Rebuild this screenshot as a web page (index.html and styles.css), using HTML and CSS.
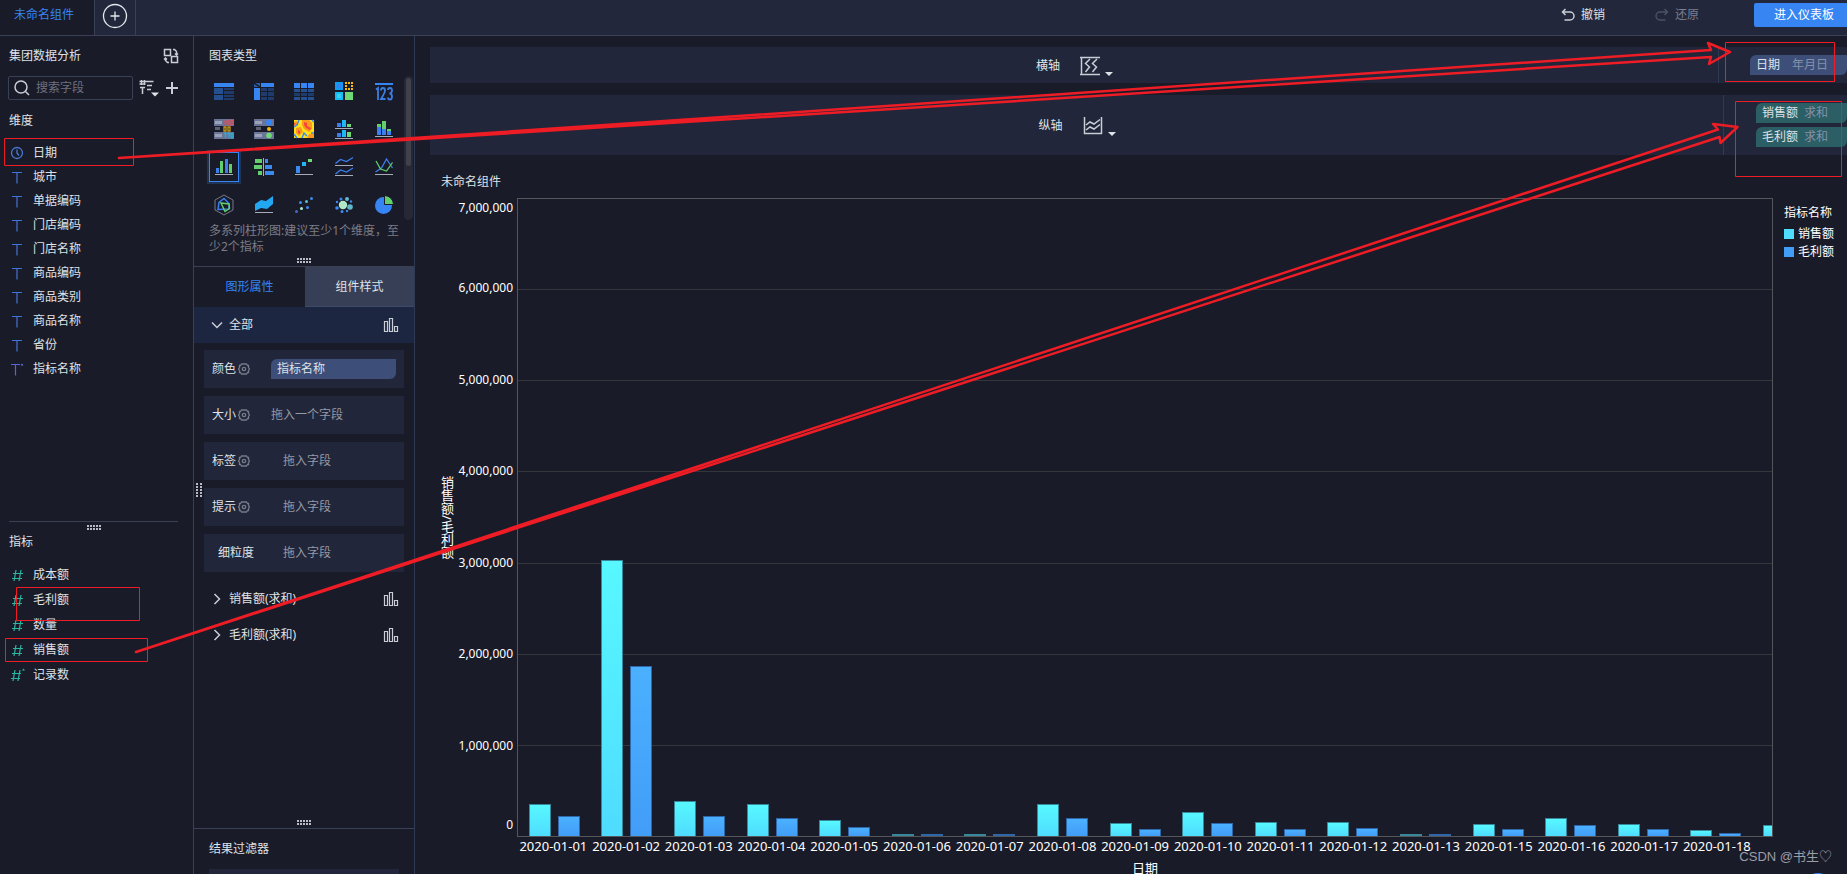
FILE: index.html
```html
<!DOCTYPE html>
<html lang="zh-CN">
<head>
<meta charset="utf-8">
<title>未命名组件</title>
<link rel="stylesheet" href="styles.css">
</head>
<body>
<svg class="defs" aria-hidden="true">
  <symbol id="i-text" viewBox="0 0 16 16"><path d="M3 3.500h10M8 3.500v11" fill="none" stroke="#3f74d6" stroke-width="1.200"/></symbol>
  <symbol id="i-text-star" viewBox="0 0 16 16"><path d="M2 3.500h9M6.500 3.500v11" fill="none" stroke="#5a62d8" stroke-width="1.200"/><path d="M11.500 4.500l1.500-2 1.500 2z" fill="#5a7be0"/></symbol>
  <symbol id="i-num" viewBox="0 0 16 16"><path d="M7 3L5 14M12 3l-2 11M4 6.500h10M3 11.500h10" fill="none" stroke="#2bb5a0" stroke-width="1.200"/></symbol>
  <symbol id="i-num-star" viewBox="0 0 16 16"><path d="M6 3L4 14M11 3L9 14M3 6.500h9M2 11.500h9" fill="none" stroke="#2bb5a0" stroke-width="1.200"/><path d="M13 3.500l1.500-2 1.500 2z" fill="#2bb5a0"/></symbol>
  <symbol id="i-gear" viewBox="0 0 12 12"><path d="M3.500 1h5l1 1.500h1v2L11.500 6l-1 1.500v2h-1l-1 1.500h-5l-1-1.500h-1v-2L.5 6l1-1.500v-2h1z" fill="none" stroke="#767a89" stroke-width="1.300"/><circle cx="6" cy="6" r="1.700" fill="none" stroke="#767a89" stroke-width="1.300"/></symbol>
  <symbol id="i-bars" viewBox="0 0 16 16"><path d="M1.500 4.500h3v10h-3zM6.500 1.500h3v13h-3zM11.500 9.500h3v5h-3z" fill="none" stroke="#c9ced6" stroke-width="1.200"/></symbol>
  <symbol id="i-grip" viewBox="0 0 14 5"><path d="M0 1h14M0 4h14" stroke="#b9bcc4" stroke-width="2" stroke-dasharray="2 1"/></symbol>
</svg>

<header class="topbar">
  <a class="topbar-tab" href="#">未命名组件</a>
  <button class="topbar-add" type="button" aria-label="添加">
    <svg width="26" height="26" viewBox="0 0 26 26"><circle cx="13" cy="13" r="11.500"/><path d="M13 8.500v9M8.500 13h9"/></svg>
  </button>
  <div class="topbar-actions">
    <button class="action" type="button">
      <svg width="14" height="14" viewBox="0 0 14 14"><path d="M4.500 1L1.500 4l3 3M1.500 4h7.500a4 4 0 0 1 0 8H3.500"/></svg>撤销
    </button>
    <button class="action action-off" type="button">
      <svg width="14" height="14" viewBox="0 0 14 14"><path d="M9.500 1l3 3-3 3M12.500 4H5a4 4 0 0 0 0 8h5.500"/></svg>还原
    </button>
  </div>
  <button class="enter" type="button">进入仪表板</button>
</header>

<div class="workspace">
  <aside class="fields">
    <section class="dims">
      <div class="fields-head">
        <h2>集团数据分析</h2>
        <button class="bare" type="button" aria-label="切换">
          <svg class="line" width="16" height="16" viewBox="0 0 16 16"><path d="M1.500 1.500h6v6h-6zM8.500 8.500h6v6h-6zM10 1.500h1.500l2 2V7M12 5.500l1.500 1.500L15 5.500M6 14.500H4.500l-2-2V10M1 11.500L2.500 10 4 11.500"/></svg>
        </button>
      </div>
      <div class="search-row">
        <label class="search">
          <svg class="line" width="16" height="16" viewBox="0 0 16 16"><circle cx="7" cy="7" r="6"/><path d="M11.500 11.500l3.500 3.500"/></svg>
          <input type="text" placeholder="搜索字段" aria-label="搜索字段">
        </label>
        <button class="bare" type="button" aria-label="排序">
          <svg class="line" width="20" height="18" viewBox="0 0 20 18"><path d="M2.500 1v5M5.500 1v5M.5 2.500h14M.5 5h6M8 6.500h5M8 10.500h4M3.500 8v7M1 8.500h5"/><path class="fill" d="M12 13.500h8L16 17.500z"/></svg>
        </button>
        <button class="bare" type="button" aria-label="新增">
          <svg class="line thick" width="14" height="14" viewBox="0 0 14 14"><path d="M7 1v12M1 7h12"/></svg>
        </button>
      </div>
      <h2 class="group">维度</h2>
      <ul class="dim-list">
        <li><svg class="ico" viewBox="0 0 16 16"><circle cx="8" cy="8" r="5.500" fill="none" stroke="#4a78cf" stroke-width="1.300"/><path d="M8 4.500V8l2 2.500" fill="none" stroke="#4a78cf" stroke-width="1.300"/></svg>日期</li>
        <li><svg class="ico"><use href="#i-text"/></svg>城市</li>
        <li><svg class="ico"><use href="#i-text"/></svg>单据编码</li>
        <li><svg class="ico"><use href="#i-text"/></svg>门店编码</li>
        <li><svg class="ico"><use href="#i-text"/></svg>门店名称</li>
        <li><svg class="ico"><use href="#i-text"/></svg>商品编码</li>
        <li><svg class="ico"><use href="#i-text"/></svg>商品类别</li>
        <li><svg class="ico"><use href="#i-text"/></svg>商品名称</li>
        <li><svg class="ico"><use href="#i-text"/></svg>省份</li>
        <li><svg class="ico"><use href="#i-text-star"/></svg>指标名称</li>
      </ul>
    </section>
    <section class="measures">
      <svg class="grip"><use href="#i-grip"/></svg>
      <h2>指标</h2>
      <ul class="measure-list">
        <li><svg class="ico"><use href="#i-num"/></svg>成本额</li>
        <li><svg class="ico"><use href="#i-num"/></svg>毛利额</li>
        <li><svg class="ico"><use href="#i-num"/></svg>数量</li>
        <li><svg class="ico"><use href="#i-num"/></svg>销售额</li>
        <li><svg class="ico"><use href="#i-num-star"/></svg>记录数</li>
      </ul>
    </section>
  </aside>

  <aside class="config">
    <section class="types">
      <h2>图表类型</h2>
      <div class="types-scroll">
        <div class="type-grid">
          <button type="button" aria-label="分组表"><svg viewBox="0 0 30 30"><path fill="#3685f2" d="M5 7h20v4H5z"/><path fill="#25508f" d="M5 12h9v6H5zM5 19h9v5H5z"/><path fill="#1f3b6b" d="M15 12h10v2H15zM15 15h10v3H15zM15 19h10v2H15zM15 22h10v2H15z"/></svg></button>
          <button type="button" aria-label="交叉表"><svg viewBox="0 0 30 30"><path fill="#3685f2" d="M12 7h13v4H12zM5 12h6v12H5z"/><path fill="#2a5ba8" d="M5 7h6v4H5z"/><path d="M5 7l6 4" stroke="#1a1b29" stroke-width="1.500"/><path fill="#1f3b6b" d="M12 12h6v3h-6zM19 12h6v3h-6zM12 16h6v4h-6zM19 16h6v4h-6zM12 21h6v3h-6zM19 21h6v3h-6z"/></svg></button>
          <button type="button" aria-label="明细表"><svg viewBox="0 0 30 30"><path fill="#3685f2" d="M5 7h6v5H5zM12 7h6v5h-6zM19 7h6v5h-6z"/><path fill="#25508f" d="M5 13h6v3H5zM12 13h6v3h-6zM19 13h6v3h-6zM5 21h6v3H5zM12 21h6v3h-6zM19 21h6v3h-6z"/><path fill="#1f3b6b" d="M5 17h6v3H5zM12 17h6v3h-6zM19 17h6v3h-6z"/></svg></button>
          <button type="button" aria-label="颜色表格"><svg viewBox="0 0 30 30"><path fill="#0e9bf5" d="M6 6h8v8H6z"/><path fill="#3a7ff0" d="M8 8h4v4H8z"/><path fill="#12bdf5" d="M6 16h8v8H6z"/><path fill="#3ccdf5" d="M8 18h4v4H8z"/><path fill="#6fd977" d="M16 16h8v8h-8z"/><path fill="#fbb90c" d="M16 6h2v2h-2zM19 6h2v2h-2zM22 6h2v2h-2zM16 9h2v2h-2zM22 9h2v2h-2zM16 12h2v2h-2zM19 12h2v2h-2zM22 12h2v2h-2z"/></svg></button>
          <button type="button" aria-label="指标卡"><svg viewBox="0 0 30 30"><path fill="#3685f2" d="M6 7h18v2H6z"/><path fill="none" stroke="#3a7fe0" stroke-width="1.800" d="M7 13.500l2-1.500v12M12 14.500q0-2.500 2-2.500t2 2.500q0 2-4 8.500h4.500M19 14q0-2 2-2t2 2.500-2.500 3q2.500 0 2.500 3t-2 3-2-2"/></svg></button>

          <button type="button" aria-label="指标色块"><svg viewBox="0 0 30 30"><path fill="#697496" d="M5 5h20v7H5zM5 18h20v7H5z"/><path fill="#9aa2b8" d="M6 7h7v3H6zM6 20h7v3H6z"/><path fill="#5c6072" d="M6 13h5v3H6z"/><path fill="none" stroke="#d0525e" stroke-width="1.300" d="M16 6.500v4M18 6.500h2v4h-2zM22 6.500h2v4h-2z"/><path fill="none" stroke="#c9981a" stroke-width="1.300" d="M15 13h2v4h-2zM19 13h2v4h-2z"/><path fill="none" stroke="#35a8d0" stroke-width="1.300" d="M15 19.500h2l-1 4M18.500 19.500h2l-1 4M22 19.500h2v4h-2z"/></svg></button>
          <button type="button" aria-label="指标状态"><svg viewBox="0 0 30 30"><path fill="#697496" d="M5 5h20v7H5zM5 18h20v7H5z"/><path fill="#9aa2b8" d="M6 7h7v3H6zM6 20h7v3H6z"/><path fill="#5c6072" d="M7 13h5v3H7z"/><circle cx="20" cy="8.500" r="3" fill="#3685f2"/><circle cx="20" cy="15" r="2" fill="#fbb90c"/><circle cx="20" cy="21.500" r="2.800" fill="#6fd977"/></svg></button>
          <button type="button" aria-label="热力图"><svg viewBox="0 0 30 30"><path fill="#ffe11a" d="M5 6h20v18H5z"/><path fill="#fb9a1c" d="M13 6h7l3 3v6l-3 3-5-3-2-4zM7 14l5-1 2 5-4 4-3-3zM5 8l3-1v4l-3 1zM20 20h5v4h-7z"/><path fill="#f5453c" d="M15 8l3 1v3l4 2-1 2-4-2-2-3zM9 16l2 1v3l-2-1zM5 9l2 1-2 1z"/><path fill="none" stroke="#3a8af0" stroke-width="1.500" d="M5 13l3-2 2-5M13 24l2-5 3 3M23 6l2 2M22 19h3M5 20l3 4"/></svg></button>
          <button type="button" aria-label="分区柱形图"><svg viewBox="0 0 30 30"><path fill="#3a7ff0" d="M8 9h4v4H8zM8 19h4v4H8z"/><path fill="#1fb8f0" d="M13 6h4v7h-4zM13 16h4v7h-4z"/><path fill="#6fd977" d="M18 10h4v3h-4zM18 18h4v5h-4z"/><path fill="#a7abb8" d="M6 14h18v1H6zM6 24h18v1H6z"/></svg></button>
          <button type="button" aria-label="堆积柱形图"><svg viewBox="0 0 30 30"><path fill="#3a7ff0" d="M8 13h4v8H8zM13 15h4v6h-4zM18 17h4v4h-4z"/><path fill="#62cf6c" d="M8 10h4v3H8zM13 7h4v8h-4zM18 15h4v2h-4z"/><path fill="#a7abb8" d="M6 22h18v1H6z"/></svg></button>

          <button class="picked" type="button" aria-label="多系列柱形图"><svg viewBox="0 0 30 30"><path fill="#3a7ff0" d="M7 16h3v5H7zM16 7h3v14h-3z"/><path fill="#62cf6c" d="M11 9h3v12h-3zM20 12h3v9h-3z"/><path fill="#a7abb8" d="M6 22h18v1H6z"/></svg></button>
          <button type="button" aria-label="对比柱状图"><svg viewBox="0 0 30 30"><path fill="#62cf6c" d="M6 7h7v4H6zM5 13h8v4H5zM9 19h4v4H9z"/><path fill="#3a8af0" d="M16 7h3v4h-3zM16 13h7v4h-7zM16 19h9v4h-9z"/><path fill="#a7abb8" d="M14 6h1v18h-1z"/></svg></button>
          <button type="button" aria-label="瀑布图"><svg viewBox="0 0 30 30"><path fill="#3a8af0" d="M7 14h4v7H7z"/><path fill="#1fb8f0" d="M13 10h4v4h-4z"/><path fill="#6fd977" d="M19 7h4v3h-4z"/><path fill="#a7abb8" d="M6 22h18v1H6z"/></svg></button>
          <button type="button" aria-label="分区折线图"><svg viewBox="0 0 30 30"><path fill="none" stroke="#3a7ff0" stroke-width="1.300" d="M6.500 11.500l5-4 6 2 6.500-4M6.500 22l5-4 6 2 6.500-4"/><path fill="#a7abb8" d="M6 13h18v1H6zM6 23h18v1H6z"/></svg></button>
          <button type="button" aria-label="多系列折线图"><svg viewBox="0 0 30 30"><path fill="none" stroke="#3a7ff0" stroke-width="1.300" d="M6.500 20l6-4 5-9 6 9"/><path fill="none" stroke="#62cf6c" stroke-width="1.300" d="M7 9l4.500 8 6 2 6-8.500"/><path fill="#a7abb8" d="M6 22h18v1H6z"/></svg></button>

          <button type="button" aria-label="雷达图"><svg viewBox="0 0 30 30"><path fill="none" stroke="#747886" d="M15 5l9 5v10l-9 5-9-5V10z"/><path fill="none" stroke="#3a7ff0" stroke-width="1.500" d="M15 8.500l5 5v5.500l-11 .5 1-7z"/><path fill="none" stroke="#62cf6c" stroke-width="1.500" d="M12 13l8 1 .5 4.500-4.500 3z"/></svg></button>
          <button type="button" aria-label="面积图"><svg viewBox="0 0 30 30"><path fill="#22a8f2" d="M6 14l6-4 5 1 7-5v8l-6 5-6-1-6 3z"/><path fill="#a7abb8" d="M6 22h18v1H6z"/></svg></button>
          <button type="button" aria-label="散点图"><svg viewBox="0 0 30 30"><g fill="#3a8af0"><circle cx="11.500" cy="12.500" r="1.500"/><circle cx="22.500" cy="8.500" r="1.500"/><circle cx="18.500" cy="17.500" r="1.500"/><circle cx="7.500" cy="21.500" r="1.500" fill="#4668c0"/></g><circle cx="17.500" cy="11.500" r="1.500" fill="#5bc0d0"/><circle cx="12.500" cy="18.500" r="1.500" fill="#aeeac8"/></svg></button>
          <button type="button" aria-label="气泡图"><svg viewBox="0 0 30 30"><circle cx="14" cy="15" r="4.200" fill="#aeeac8"/><g fill="#5fb8cc"><circle cx="18" cy="9" r="2"/><circle cx="21" cy="17" r="2.800"/></g><g fill="#3a8af0"><circle cx="12" cy="9" r="1.500"/><circle cx="8" cy="12" r="1.200"/><circle cx="8" cy="18" r="1.800"/><circle cx="13" cy="21.500" r="1.500"/><circle cx="18" cy="21" r="1.200"/><circle cx="22" cy="11.500" r="1.200"/></g></svg></button>
          <button type="button" aria-label="饼图"><svg viewBox="0 0 30 30"><circle cx="14.500" cy="15.500" r="8.500" fill="#3685f2"/><path fill="#62cf6c" stroke="#1a1b29" d="M15.500 5.500a9 9 0 0 1 9 9h-9z"/></svg></button>
        </div>
        <div class="scroll-track"><div class="scroll-thumb"></div></div>
      </div>
      <p class="hint">多系列柱形图:建议至少1个维度，至少2个指标</p>
      <svg class="grip"><use href="#i-grip"/></svg>
    </section>

    <section class="attrs">
      <svg class="side-grip" width="6" height="14" viewBox="0 0 6 14"><path d="M1 0v14M5 0v14" stroke="#b9bcc4" stroke-width="2" stroke-dasharray="2 1"/></svg>
      <div class="tabs">
        <button class="tab tab-on" type="button">图形属性</button>
        <button class="tab" type="button">组件样式</button>
      </div>
      <button class="fold fold-open" type="button">
        <svg class="line" width="12" height="12" viewBox="0 0 12 12"><path d="M1 3.500l5 5 5-5"/></svg>
        <span>全部</span><svg class="ico"><use href="#i-bars"/></svg>
      </button>
      <div class="cards">
        <div class="card"><span class="card-name">颜色<svg class="gear"><use href="#i-gear"/></svg></span><span class="pill pill-wide">指标名称</span></div>
        <div class="card"><span class="card-name">大小<svg class="gear"><use href="#i-gear"/></svg></span><span class="drop">拖入一个字段</span></div>
        <div class="card"><span class="card-name">标签<svg class="gear"><use href="#i-gear"/></svg></span><span class="drop">拖入字段</span></div>
        <div class="card"><span class="card-name">提示<svg class="gear"><use href="#i-gear"/></svg></span><span class="drop">拖入字段</span></div>
        <div class="card"><span class="card-name card-plain">细粒度</span><span class="drop">拖入字段</span></div>
      </div>
      <button class="fold" type="button">
        <svg class="line" width="12" height="12" viewBox="0 0 12 12"><path d="M3.500 1l5 5-5 5"/></svg>
        <span>销售额(求和)</span><svg class="ico"><use href="#i-bars"/></svg>
      </button>
      <button class="fold" type="button">
        <svg class="line" width="12" height="12" viewBox="0 0 12 12"><path d="M3.500 1l5 5-5 5"/></svg>
        <span>毛利额(求和)</span><svg class="ico"><use href="#i-bars"/></svg>
      </button>
      <svg class="grip"><use href="#i-grip"/></svg>
    </section>

    <section class="filter">
      <h2>结果过滤器</h2>
      <div class="filter-box"></div>
    </section>
  </aside>

  <main class="canvas">
    <div class="axis-row">
      <div class="axis-name">横轴
        <svg class="line" width="20" height="20" viewBox="0 0 20 20"><path d="M0 1.500h20M0 18.500h20M1.500 1v18M10 3L5.500 7.500l4 3.500L5.500 16M17 3l-4.500 4.500 4 3.500-4 5"/></svg>
        <svg class="caret" width="8" height="4" viewBox="0 0 8 4"><path d="M0 0h8L4 4z"/></svg>
      </div>
      <div class="axis-fields axis-fields-x"><span class="pill">日期<i class="pill-far">年月日</i></span></div>
    </div>
    <div class="axis-row">
      <div class="axis-name">纵轴
        <svg class="line" width="20" height="20" viewBox="0 0 20 20"><path d="M1.500 1v17M18.500 1v17M1 17.500h18M3 9l4-3 4 2 6-4.500M3 14l4-3 4 2 6-4.500"/></svg>
        <svg class="caret" width="8" height="4" viewBox="0 0 8 4"><path d="M0 0h8L4 4z"/></svg>
      </div>
      <div class="axis-fields axis-fields-y"><span class="pill pill-teal">销售额<i>求和</i></span><span class="pill pill-teal">毛利额<i>求和</i></span></div>
    </div>
    <h1 class="chart-title">未命名组件</h1>
    <div class="chart">
      <div class="y-title">销售额/毛利额</div>
      <div class="y-labels">
        <span>7,000,000</span><span>6,000,000</span><span>5,000,000</span><span>4,000,000</span><span>3,000,000</span><span>2,000,000</span><span>1,000,000</span><span>0</span>
      </div>
      <div class="plot">
        <div class="grid-lines"><i></i><i></i><i></i><i></i><i></i><i></i><i></i></div>
        <div class="bars" id="bars"></div>
      </div>
      <div class="legend">
        <strong>指标名称</strong>
        <span><i class="key key-a"></i>销售额</span>
        <span><i class="key key-b"></i>毛利额</span>
      </div>
      <div class="x-labels" id="x-labels"></div>
      <div class="x-title">日期</div>
    </div>
  </main>
</div>

<div class="watermark">CSDN @书生♡</div>
<div class="bubble"></div>

<svg class="marks" viewBox="0 0 1847 874" preserveAspectRatio="none" aria-hidden="true">
  <g class="boxes">
    <rect x="4.500" y="138.500" width="129" height="27"/>
    <rect x="16.500" y="587.500" width="123" height="33"/>
    <rect x="5.500" y="638.500" width="142" height="23"/>
    <rect x="1725.500" y="42.500" width="109" height="39"/>
    <rect x="1735.500" y="101.500" width="106" height="75"/>
  </g>
  <path d="M119 158L1711 50l-3-7 22 9-21 12 2-7z"/>
  <path d="M136 652L1718 129.500l-5-5.500 24.500 3-17 16-1-6z"/>
</svg>
<script src="chart.js"></script>
</body>
</html>
```

FILE: chart.js
```js
// Daily sales and gross profit, as percentages of the 7,000,000 axis maximum.
const rows = [
  ["2020-01-01", 5.1, 3.1], ["2020-01-02", 43.4, 26.7], ["2020-01-03", 5.5, 3.2],
  ["2020-01-04", 5.1, 2.9], ["2020-01-05", 2.5, 1.4], ["2020-01-06", 0.3, 0.3],
  ["2020-01-07", 0.3, 0.3], ["2020-01-08", 5.1, 2.9], ["2020-01-09", 2.1, 1.1],
  ["2020-01-10", 3.7, 2.1], ["2020-01-11", 2.2, 1.1], ["2020-01-12", 2.2, 1.3],
  ["2020-01-13", 0.3, 0.3], ["2020-01-15", 1.9, 1.1], ["2020-01-16", 2.9, 1.8],
  ["2020-01-17", 1.9, 1.1], ["2020-01-18", 1, 0.5], ["", 1.8, 1]
];
const bars = document.getElementById("bars");
const labels = document.getElementById("x-labels");
for (const [day, sales, profit] of rows) {
  const group = document.createElement("div");
  group.className = "bar-group";
  for (const [kind, value] of [["bar-a", sales], ["bar-b", profit]]) {
    const bar = document.createElement("div");
    bar.className = "bar " + kind + (value < 0.4 ? " bar-dim" : "");
    bar.style.height = value + "%";
    group.append(bar);
  }
  bars.append(group);
  const label = document.createElement("span");
  label.textContent = day;
  labels.append(label);
}
```

FILE: styles.css
```css
* { box-sizing: border-box; }

body {
  margin: 0;
  height: 100vh;
  overflow: hidden;
  display: flex;
  flex-direction: column;
  background: #1a1b29;
  color: #dfe2e6;
  font: 12px/16px "Noto Sans", "Noto Sans CJK SC", sans-serif;
}

h1, h2 { margin: 0; font-size: 12px; font-weight: 400; line-height: 16px; }
ul { margin: 0; padding: 0; list-style: none; }
i { font-style: normal; }
button { font: inherit; color: inherit; background: none; border: 0; padding: 0; }
svg { display: block; flex: none; }
.defs { position: absolute; width: 0; height: 0; }
.ico { width: 16px; height: 16px; }
.line { fill: none; stroke: #c9ced6; stroke-width: 1.5; }
.line .fill { fill: #dfe2e6; stroke: none; }
.line.thick { stroke-width: 2; }
.grip { width: 14px; height: 5px; }

/* top bar */
.topbar {
  flex: none;
  display: flex;
  height: 36px;
  background: #22273b;
  border-bottom: 1px solid #3a4056;
}
.topbar-tab {
  width: 95px;
  padding: 7px 0 0 14px;
  background: #1a1b29;
  border-right: 1px solid #3a4056;
  color: #3685f2;
  text-decoration: none;
}
.topbar-add { width: 41px; padding: 2px 0 0 7px; border-right: 1px solid #3a4056; }
.topbar-add svg { margin-bottom: 6px; fill: none; stroke: #e6e8ec; stroke-width: 1.3; }
.topbar-actions { display: flex; gap: 50px; margin-left: auto; padding-bottom: 5px; }
.action { display: flex; align-items: center; gap: 6px; }
.action svg { fill: none; stroke: #c9ced6; stroke-width: 1.5; }
.action-off { color: #7b7f90; }
.action-off svg { stroke: #4c5166; }
.enter {
  height: 24px;
  margin: 3px 0 0 55px;
  padding: 0 13px 0 20px;
  background: #3685f2;
  border-radius: 2px 0 0 2px;
  color: #fff;
}

.workspace { flex: 1; min-height: 0; display: flex; }

/* field list */
.fields {
  flex: none;
  width: 194px;
  display: flex;
  flex-direction: column;
  border-right: 1px solid #3a4056;
}
.dims { flex: 473 0 0; padding: 12px 14px 0 8px; }
.dims h2 { padding-left: 1px; }
.measures { flex: 352 0 0; margin: 0 15px 0 9px; border-top: 1px solid #3a4056; }
.fields-head { display: flex; justify-content: space-between; }
.search-row { display: flex; align-items: center; gap: 6px; margin-top: 12px; }
.search {
  flex: 1;
  min-width: 0;
  display: flex;
  align-items: center;
  gap: 6px;
  height: 24px;
  padding-left: 5px;
  border: 1px solid #3a4056;
  border-radius: 2px;
}
.search input {
  width: 100%;
  min-width: 0;
  padding: 0;
  border: 0;
  outline: 0;
  background: none;
  color: inherit;
  font: inherit;
}
.search input::placeholder { color: #6d7180; opacity: 1; }
.group { margin: 13px 0 12px; }
.dim-list li, .measure-list li { display: flex; align-items: center; gap: 8px; height: 24px; }
.dim-list li { padding-left: 1px; }
.measure-list li { height: 25px; }
.measures .grip { margin: 3px 0 0 78px; }
.measures h2 { margin: 4px 0 12px; }

/* chart configuration */
.config {
  flex: none;
  width: 221px;
  display: flex;
  flex-direction: column;
  border-right: 1px solid #2f3a54;
}
.types { padding: 12px 0 3px 15px; border-bottom: 1px solid #3a4056; }
.types-scroll { display: flex; justify-content: space-between; margin-top: 12px; padding-right: 1px; }
.type-grid { display: grid; grid-template-columns: repeat(5, 30px); gap: 8px 10px; }
.type-grid button { width: 30px; height: 30px; }
.type-grid svg { width: 30px; height: 30px; }
.type-grid .picked { outline: 1px solid #3685f2; outline-offset: -1px; box-shadow: 0 0 0 2px #1f3352; }
.scroll-track { width: 9px; padding: 2px; border-radius: 5px; background: #262835; }
.scroll-thumb { height: 88px; border-radius: 3px; background: #3f414c; }
.hint { margin: 3px 10px 3px 0; color: #7a7d87; }
.types .grip { margin-left: 88px; }

.attrs { flex: 1; position: relative; display: flex; flex-direction: column; }
.side-grip { position: absolute; left: 2px; top: 216px; }
.tabs { flex: none; display: flex; height: 40px; }
.tab { flex: 1; background: #373f57; border-bottom: 1px solid #3a4a68; }
.tab-on { flex: 0 0 111px; background: none; border: 0; color: #3685f2; }
.fold {
  flex: none;
  display: flex;
  align-items: center;
  gap: 6px;
  height: 36px;
  padding: 0 15px 0 17px;
}
.fold .ico { margin-left: auto; }
.fold-open { background: #1c2641; }
.cards { display: grid; gap: 8px; padding: 7px 10px 9px; }
.card {
  display: flex;
  align-items: center;
  height: 38px;
  padding: 0 8px;
  background: #21263a;
}
.card-name { display: flex; align-items: center; gap: 2px; width: 59px; }
.card-plain { padding-left: 6px; }
.gear { width: 12px; height: 12px; }
.drop { min-width: 72px; text-align: center; color: #9598a5; }
.attrs .grip { margin: auto auto 3px 103px; }
.pill {
  display: flex;
  align-items: center;
  gap: 6px;
  height: 20px;
  padding: 0 6px;
  background: #3d4f79;
  border-radius: 6px 0;
}
.pill i { color: #8591a8; }
.pill .pill-far { padding-left: 6px; }
.pill-wide { flex: 1; }
.pill-teal { background: #2b5e65; }
.filter { padding: 12px 15px 0; border-top: 1px solid #3a4056; }
.filter-box { height: 5px; margin-top: 12px; background: #21263a; }

/* canvas */
.canvas {
  flex: 1;
  min-width: 0;
  display: flex;
  flex-direction: column;
  padding: 11px 0 0 15px;
}
.axis-row { flex: none; display: flex; background: #21263a; margin-bottom: 12px; }
.axis-name { flex: 1; display: flex; align-items: center; justify-content: center; padding: 1px 0 0 1px; }
.axis-name .line { margin-left: 20px; }
.caret { margin: 16px 0 0 5px; fill: #dfe2e6; }
.axis-fields { display: grid; gap: 4px; padding: 8px 0 8px 32px; border-left: 1px solid #2f3a54; }
.axis-fields-x { width: 129px; padding-left: 31px; }
.axis-fields-y { width: 124px; }
.chart-title { margin: 7px 0 8px 11px; }
.chart {
  flex: 1;
  min-height: 0;
  display: grid;
  grid-template-columns: 14px 63px 1fr 74px;
  grid-template-rows: minmax(0, 1fr) 18px 19px;
  padding-left: 10px;
  color: #fff;
}
.y-title { place-self: center; writing-mode: vertical-rl; font-size: 13px; }
.y-labels {
  display: flex;
  flex-direction: column;
  align-items: flex-end;
  justify-content: space-between;
  padding: 0 4px 4px 0;
}
.y-labels span:first-child { margin-bottom: -11px; padding-top: 2px; }
.y-labels span:last-child { margin-top: -12px; }
.plot {
  position: relative;
  overflow: hidden;
  border: 1px solid #55565a;
}
.grid-lines { position: absolute; inset: 0; display: flex; flex-direction: column; }
.grid-lines i { flex: 1; border-bottom: 1px solid #35363c; }
.grid-lines i:last-child { border: 0; }
.bars { position: absolute; inset: 0; display: flex; }
.bar-group, .x-labels span { flex: 0 0 5.79%; }
.bar-group { display: flex; align-items: flex-end; justify-content: center; gap: 7px; }
.bar { width: 22px; border: 1px solid; border-bottom: 0; }
.bar-a { background: linear-gradient(#57f8ff, #4fdcff); border-color: #38889c; }
.bar-b { background: linear-gradient(#4bb0ff, #429df7); border-color: #3067a8; }
.bar-a.bar-dim { background: #38889c; }
.bar-b.bar-dim { background: #2d66a6; }
.legend { padding: 7px 0 0 11px; }
.legend strong { display: block; margin-bottom: 4px; font-weight: 400; }
.legend span { display: flex; align-items: center; gap: 4px; height: 18px; }
.key { width: 10px; height: 10px; }
.key-a { background: #4fdcff; }
.key-b { background: #429df7; }
.x-labels { grid-column: 3; display: flex; overflow: hidden; font-size: 13px; line-height: 18px; }
.x-labels span { text-align: center; }
.x-title { grid-column: 3; text-align: center; font-size: 13px; line-height: 26px; }

/* overlays */
.watermark { position: absolute; right: 15px; bottom: 8px; color: #9c9da6; font: 13px/18px "Liberation Sans", "Noto Sans CJK SC", sans-serif; }
.bubble { position: absolute; right: 15px; bottom: -27px; width: 28px; height: 28px; border-radius: 50%; background: #3685f2; }
.marks { position: absolute; inset: 0; width: 100%; height: 100%; pointer-events: none; fill: none; stroke: #ee1c25; stroke-width: 2.5; stroke-linejoin: round; }
.boxes { stroke-width: 1; }
```
